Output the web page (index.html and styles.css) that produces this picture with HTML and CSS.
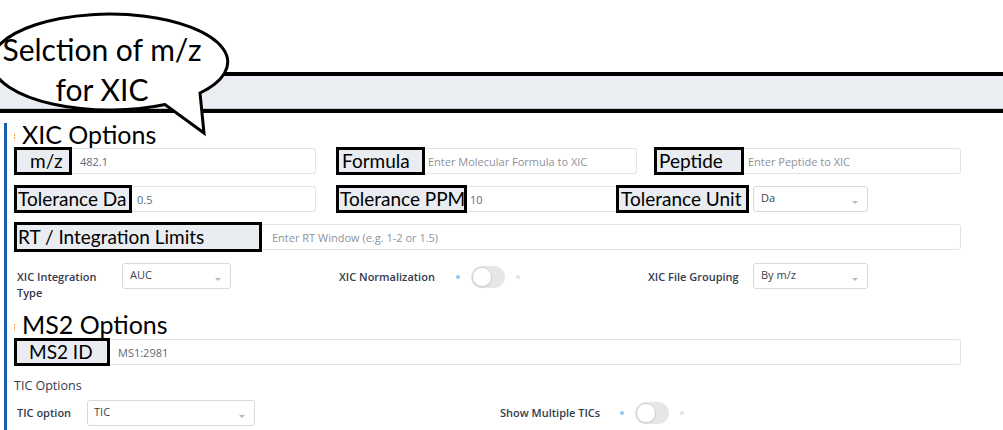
FILE: index.html
```html
<!DOCTYPE html>
<html>
<head>
<meta charset="utf-8">
<link rel="stylesheet" href="styles.css">
</head>
<body>
<div class="bubble">
  <svg class="bubble-shape" width="240" height="140" viewBox="0 0 240 140">
    <path d="M200,93 A118,48 0 1,0 165,104.5 L204,133 Z" fill="#fff" stroke="#000" stroke-width="3" stroke-linejoin="miter"/>
  </svg>
  <div class="bubble-text">Selction of m/z<br>for XIC</div>
</div>
<div class="topbar"></div>
<div class="main">
  <div class="section-title"><span class="mark"></span>XIC Options</div>

  <div class="row r1">
    <div class="field"><span class="tag w-mz">m/z</span><span class="inp val w-mzi">482.1</span></div>
    <div class="field c2"><span class="tag w-formula">Formula</span><span class="inp ph w-formulai">Enter Molecular Formula to XIC</span></div>
    <div class="field c3"><span class="tag w-peptide">Peptide</span><span class="inp ph w-peptidei">Enter Peptide to XIC</span></div>
  </div>

  <div class="row r2">
    <div class="field"><span class="tag w-tolda">Tolerance Da</span><span class="inp val w-toldai">0.5</span></div>
    <div class="field c2"><span class="tag w-tolppm">Tolerance PPM</span><span class="inp val w-tolppmi">10</span></div>
    <div class="field"><span class="tag w-tolunit">Tolerance Unit</span><span class="sel w-unitsel">Da<i class="caret"></i></span></div>
  </div>

  <div class="row r3">
    <div class="field"><span class="tag w-rt">RT / Integration Limits</span><span class="inp ph w-rti">Enter RT Window (e.g. 1-2 or 1.5)</span></div>
  </div>

  <div class="row r4">
    <span class="lbl lbl-int">XIC Integration<br>Type</span>
    <span class="sel w-auc">AUC<i class="caret"></i></span>
    <span class="lbl lbl-norm">XIC Normalization</span>
    <span class="toggle"><i class="dot on"></i><i class="track"><i class="knob"></i></i><i class="dot off"></i></span>
    <span class="lbl lbl-group">XIC File Grouping</span>
    <span class="sel w-group">By m/z<i class="caret"></i></span>
  </div>

  <div class="section-title ms2"><span class="mark"></span>MS2 Options</div>

  <div class="row r6">
    <div class="field"><span class="tag w-ms2">MS2 ID</span><span class="inp val w-ms2i">MS1:2981</span></div>
  </div>

  <div class="tic-title">TIC Options</div>

  <div class="row r8">
    <span class="lbl lbl-tic">TIC option</span>
    <span class="sel w-tic">TIC<i class="caret"></i></span>
    <span class="lbl lbl-multi">Show Multiple TICs</span>
    <span class="toggle"><i class="dot on"></i><i class="track"><i class="knob"></i></i><i class="dot off"></i></span>
  </div>
</div>
</body>
</html>
```

FILE: styles.css
```css
html, body {
  margin: 0;
  padding: 0;
}
body {
  width: 1003px;
  height: 430px;
  overflow: hidden;
  background: #fff;
  font-family: "Open Sans", "Liberation Sans", sans-serif;
  position: relative;
}

/* speech bubble annotation */
.bubble {
  position: absolute;
  left: 0;
  top: 0;
  width: 240px;
  height: 140px;
  z-index: 5;
}
.bubble-shape {
  display: block;
}
.bubble-text {
  position: absolute;
  left: 0;
  top: 29px;
  width: 204px;
  text-align: center;
  font-family: Lato, "Open Sans", sans-serif;
  font-size: 30px;
  line-height: 40px;
  color: #000;
}

/* grey header bar */
.topbar {
  margin-top: 72px;
  height: 33px;
  background: #eaedf1;
  border-top: 4px solid #000;
  border-bottom: 4px solid #000;
  box-shadow: inset 0 -1px 0 #c4c8ce;
}

.main {
  margin-left: 4px;
  margin-top: 10px;
  border-left: 3px solid #1a5cb0;
  padding-left: 7px;
  padding-bottom: 20px;
}

.section-title {
  display: flex;
  align-items: center;
  height: 22px;
  font-family: Lato, "Open Sans", sans-serif;
  font-size: 25px;
  line-height: 22px;
  color: #000;
}
.mark {
  width: 1px;
  height: 7px;
  margin-right: 7px;
  margin-top: 6px;
  background: repeating-linear-gradient(#e8a54c 0 2px, transparent 2px 3px);
}
.section-title.ms2 {
  margin-top: 12px;
}

.row {
  display: flex;
  align-items: center;
}
.r1 { margin-top: 2px; height: 28px; }
.r2 { margin-top: 10px; height: 28px; }
.r3 { margin-top: 9px; height: 30px; }
.r4 { margin-top: 11px; align-items: flex-start; height: 38px; }
.r6 { margin-top: 3px; height: 28px; }
.r8 { margin-top: 5px; height: 26px; }

.field {
  display: flex;
  align-items: center;
}
.c2 { margin-left: 20px; }
.c3 { margin-left: 17px; }

.tag {
  box-sizing: border-box;
  height: 28px;
  border: 3px solid #000;
  background: #e9ecf0;
  font-family: Lato, "Open Sans", sans-serif;
  font-size: 19px;
  line-height: 22px;
  color: #000;
  padding-left: 1px;
  white-space: nowrap;
  overflow: hidden;
  position: relative;
  z-index: 1;
  flex: none;
}
.w-mz { width: 58px; padding-left: 13px; }
.w-formula { width: 89px; padding-left: 3px; }
.w-peptide { width: 90px; padding-left: 2px; }
.w-tolda { width: 118px; }
.w-tolppm { width: 131px; }
.w-tolunit { width: 133px; padding-left: 2px; }
.w-rt { width: 248px; height: 30px; line-height: 24px; }
.w-ms2 { width: 96px; padding-left: 12px; }

.inp {
  box-sizing: border-box;
  height: 26px;
  border: 1px solid #dfe3e8;
  border-left: none;
  border-radius: 0 3px 3px 0;
  font-size: 11px;
  display: flex;
  align-items: center;
  padding-left: 7px;
  white-space: nowrap;
  flex: none;
}
.inp.val { color: #5f6877; }
.inp.ph { color: #8d939c; }
.w-mzi { width: 244px; padding-left: 8px; }
.w-formulai { width: 212px; padding-left: 3px; }
.w-peptidei { width: 217px; padding-left: 4px; }
.w-toldai { width: 184px; padding-left: 5px; }
.w-tolppmi { width: 149px; padding-left: 3px; border-right: none; border-radius: 0; }
.w-rti { width: 699px; padding-left: 10px; }
.w-ms2i { width: 851px; padding-left: 8px; }

.sel {
  box-sizing: border-box;
  height: 26px;
  border: 1px solid #d6dae0;
  border-radius: 3px;
  font-size: 11px;
  color: #3a3f4d;
  padding: 4px 0 0 7px;
  line-height: 14px;
  position: relative;
  background: #fff;
  flex: none;
}
.caret {
  position: absolute;
  right: 9px;
  top: 14px;
  width: 0;
  height: 0;
  border-left: 3px solid transparent;
  border-right: 3px solid transparent;
  border-top: 3px solid #b5b9bf;
}
.w-unitsel { width: 115px; margin-left: 4px; }
.w-auc { width: 109px; }
.w-group { width: 115px; }
.w-tic { width: 168px; padding-left: 6px; }

.lbl {
  font-size: 11px;
  font-weight: 600;
  color: #343a4e;
  line-height: 16px;
  white-space: nowrap;
  flex: none;
  box-sizing: border-box;
}
.lbl-int {
  width: 108px;
  padding-left: 3px;
  padding-top: 6px;
  white-space: normal;
}
.lbl-norm {
  margin-left: 108px;
  width: 117px;
  padding-top: 6px;
}
.lbl-group {
  margin-left: 128px;
  width: 105px;
  padding-top: 6px;
}
.lbl-tic {
  width: 73px;
  padding-left: 3px;
}
.lbl-multi {
  margin-left: 245px;
  width: 120px;
}

.toggle {
  display: flex;
  align-items: center;
  height: 26px;
  flex: none;
}
.r4 .toggle { margin-top: 1px; }
.dot {
  width: 4px;
  height: 4px;
  border-radius: 50%;
}
.dot.on { background: #8cc8f0; }
.dot.off { background: #e2e2e2; }
.track {
  width: 34px;
  height: 22px;
  border-radius: 11px;
  background: #e6e6e6;
  margin: 0 11px;
  display: flex;
  align-items: center;
  padding-left: 1px;
  box-sizing: border-box;
}
.knob {
  width: 20px;
  height: 20px;
  border-radius: 50%;
  background: #fff;
  box-sizing: border-box;
  border: 1px solid #d4d4d4;
  box-shadow: 0 1px 1px rgba(0,0,0,0.08);
}

.tic-title {
  margin-top: 11px;
  font-size: 12.5px;
  line-height: 18px;
  color: #343a4e;
}
```
